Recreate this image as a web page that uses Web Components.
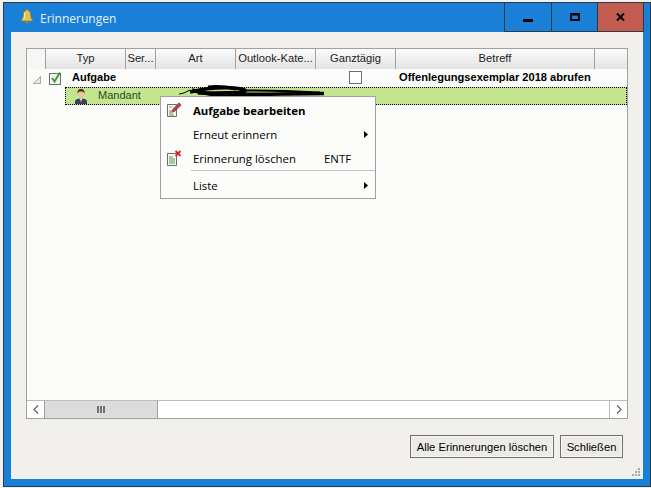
<!DOCTYPE html>
<html lang="de">
<head>
<meta charset="utf-8">
<title>Erinnerungen</title>
<style>
  html, body { margin: 0; height: 100%; overflow: hidden; background: #f0f0f0; }
  body { font: 11px "Liberation Sans", Arial, sans-serif; color: #000; }
</style>
</head>
<body>
<reminder-window caption="Erinnerungen">
  <reminder-grid>
    <grid-row kind="parent">
      <span slot="type">Aufgabe</span>
      <span slot="subject">Offenlegungsexemplar 2018 abrufen</span>
    </grid-row>
    <grid-row kind="child">
      <span slot="type">Mandant</span>
    </grid-row>
  </reminder-grid>
  <dialog-button slot="actions" style="width:144px">Alle Erinnerungen löschen</dialog-button>
  <dialog-button slot="actions" style="width:63px">Schließen</dialog-button>
  <context-menu slot="overlay">
    <menu-entry icon="edit" bold>Aufgabe bearbeiten</menu-entry>
    <menu-entry sub>Erneut erinnern</menu-entry>
    <menu-entry icon="delete" shortcut="ENTF">Erinnerung löschen</menu-entry>
    <menu-sep></menu-sep>
    <menu-entry sub>Liste</menu-entry>
  </context-menu>
</reminder-window>

<script>
// window frame with title bar, caption buttons and client area
class ReminderWindow extends HTMLElement {
  constructor() {
    super();
    const caption = this.getAttribute('caption') || '';
    this.attachShadow({ mode: 'open' }).innerHTML = `
      <style>
        :host {
          display: flex;
          flex-direction: column;
          box-sizing: border-box;
          width: 648px;
          height: 485px;
          margin: 2px 0 0 3px;
          border: 1px solid #2b3a4a;
          background: #1a7fd6;
          position: relative;
        }
        .bar { display: flex; align-items: stretch; height: 29px; flex: none; }
        .bell { margin: 6px 0 0 17px; }
        .title {
          flex: 1;
          padding: 7px 0 0 7px;
          font: 12px "Open Sans", "Noto Sans", sans-serif;
          color: #e6f1fb;
        }
        .cap {
          box-sizing: border-box;
          display: flex;
          align-items: center;
          justify-content: center;
          border-left: 1px solid #2b3a4a;
          border-bottom: 1px solid #2b3a4a;
        }
        .min { width: 47px; }
        .max { width: 46px; }
        .close { width: 47px; background: #c25b50; border-right: 1px solid #2b3a4a; margin-right: 6px; }
        .client {
          flex: 1;
          min-height: 0;
          margin: 0 7px 7px;
          padding: 16px 15px 21px;
          display: flex;
          flex-direction: column;
          background: #f1f0ed;
          position: relative;
        }
        .grid { flex: 1; min-height: 0; display: flex; }
        .actions { display: flex; justify-content: flex-end; gap: 6px; margin: 16px 5px 0 0; }
        .grip { position: absolute; right: 2px; bottom: 2px; }
      </style>
      <div class="bar">
        <svg class="bell" width="12" height="15" viewBox="0 0 12 15">
          <path d="M6 0.5c.8 0 1.2.5 1.2 1.1C9 2.2 9.6 3.8 9.7 6c.1 2.500.8 3.900 1.800 5v1H.5v-1c1-1.100 1.700-2.500 1.800-5 .1-2.200.7-3.800 2.500-4.400C4.800 1 5.200.5 6 .5z" fill="#e3c34f" stroke="#8f7a2c" stroke-width=".7"/>
          <path d="M4.300 12.500h3.400c0 1.200-.8 2-1.700 2s-1.700-.8-1.700-2z" fill="#a88a32"/>
          <path d="M4 3.500C3.500 5 3.600 8 2.800 10.500" stroke="#fff3b8" fill="none"/>
        </svg>
        <div class="title">${caption}</div>
        <div class="cap min">
          <svg width="10" height="10" viewBox="0 0 10 10"><rect y="7" width="10" height="3"/></svg>
        </div>
        <div class="cap max">
          <svg width="10" height="8" viewBox="0 0 10 8"><path fill-rule="evenodd" d="M0 0h10v8H0zM2 2.500v3.500h6V2.500z"/></svg>
        </div>
        <div class="cap close">
          <svg width="9" height="8" viewBox="0 0 9 8"><path d="M1 .5l7 7M8 .5l-7 7" stroke="#000" stroke-width="2" fill="none"/></svg>
        </div>
      </div>
      <div class="client">
        <div class="grid"><slot></slot></div>
        <div class="actions"><slot name="actions"></slot></div>
        <svg class="grip" width="9" height="9" viewBox="0 0 9 9" fill="#a8a8a4">
          <rect x="6" y="0" width="2" height="2"/><rect x="3" y="3" width="2" height="2"/><rect x="6" y="3" width="2" height="2"/>
          <rect x="0" y="6" width="2" height="2"/><rect x="3" y="6" width="2" height="2"/><rect x="6" y="6" width="2" height="2"/>
        </svg>
        <slot name="overlay"></slot>
      </div>
    `;
  }
}
customElements.define('reminder-window', ReminderWindow);

// grid with column header, rows and the horizontal scrollbar
class ReminderGrid extends HTMLElement {
  constructor() {
    super();
    const cols = [['Typ', 80], ['Ser...', 30], ['Art', 80], ['Outlook-Kate...', 80], ['Ganztägig', 80], ['Betreff', 199], ['', 0]];
    const heads = cols.map(([t, w]) =>
      `<div class="head" style="${w ? `width:${w}px` : 'flex:1'}">${t}</div>`).join('');
    this.attachShadow({ mode: 'open' }).innerHTML = `
      <style>
        :host {
          display: flex;
          flex-direction: column;
          flex: 1;
          box-sizing: border-box;
          border: 1px solid #a0a0a0;
          background: #fcfcfa;
        }
        .heads { display: flex; height: 20px; flex: none; }
        .corner { width: 18px; background: #f6f6f4; border-right: 1px solid #a0a0a0; }
        .head {
          box-sizing: border-box;
          padding: 3px 0 0;
          text-align: center;
          white-space: nowrap;
          overflow: hidden;
          font-size: 11.2px;
          color: #222;
          border-right: 1px solid #a0a0a0;
          background: linear-gradient(#fbfbfb, #e4e4e4);
        }
        .head:last-child { border-right: 0; }
        .body { flex: 1; min-height: 0; }
      </style>
      <div class="heads"><div class="corner"></div>${heads}</div>
      <div class="body"><slot></slot></div>
      <h-scrollbar></h-scrollbar>
    `;
  }
}
customElements.define('reminder-grid', ReminderGrid);

// one row of the tree, parent (task) or child (client)
class GridRow extends HTMLElement {
  constructor() {
    super();
    const parent = this.getAttribute('kind') === 'parent';
    const tick = `
      <svg width="14" height="14" viewBox="0 0 14 14">
        <rect x=".5" y="2.500" width="11" height="11" fill="#f4f4f4" stroke="#6e6e6e"/>
        <path d="M3 7l2.500 3.500L11 1.500" fill="none" stroke="#3f9c2a" stroke-width="2"/>
      </svg>`;
    const person = `
      <svg width="14" height="16" viewBox="0 0 14 16" style="margin-bottom:1px">
        <path d="M1 16v-2.500C1 11.500 3 10.500 7 10.500s6 1 6 3V16z" fill="#33415f"/>
        <path d="M5.500 10.500L7 14l1.500-3.500z" fill="#fff"/>
        <path d="M6.600 11.500h.8l.3 3h-1.400z" fill="#b03a2e"/>
        <ellipse cx="7" cy="6" rx="3.300" ry="4" fill="#eec39a"/>
        <path d="M3.500 6C3 2 5 1 7 1s4 1 3.500 5C10 4 9 3.500 7 3.500S4 4 3.500 6z" fill="#4a2f1b"/>
      </svg>`;
    this.attachShadow({ mode: 'open' }).innerHTML = parent ? `
      <style>
        :host { display: flex; align-items: center; height: 18px; font-weight: bold; }
        .tree { margin: 3px 8px 0 6px; }
        .type { box-sizing: border-box; width: 286px; padding: 0 0 2px 9px; }
        .box { box-sizing: border-box; width: 13px; height: 13px; margin-bottom: 2px; background: #fff; border: 1px solid #707070; }
        .sub { padding: 0 0 2px 37px; white-space: nowrap; font-size: 11.1px; }
      </style>
      <svg class="tree" width="8" height="8" viewBox="0 0 8 8"><path d="M7.500.5v7h-7z" fill="#e8e8e8" stroke="#a8a8a8"/></svg>
      ${tick}
      <div class="type"><slot name="type"></slot></div>
      <div class="box"></div>
      <div class="sub"><slot name="subject"></slot></div>
    ` : `
      <style>
        :host {
          display: flex;
          align-items: center;
          box-sizing: border-box;
          height: 18px;
          margin-left: 38px;
          padding-left: 9px;
          background: #c4e58f;
          outline: 1px dotted #000;
          outline-offset: -1px;
          color: #1f4d1f;
        }
        .type { padding: 0 0 2px 10px; }
      </style>
      ${person}
      <div class="type"><slot name="type"></slot></div>
    `;
  }
}
customElements.define('grid-row', GridRow);

class HScrollbar extends HTMLElement {
  constructor() {
    super();
    this.attachShadow({ mode: 'open' }).innerHTML = `
      <style>
        :host {
          display: flex;
          flex: none;
          height: 17px;
          background: #fff;
          border-top: 1px solid #bcbcbc;
        }
        .btn { width: 17px; display: flex; align-items: center; justify-content: center; }
        .thumb {
          box-sizing: border-box;
          width: 114px;
          background: #dcdcdc;
          border: 1px solid #a0a0a0;
          border-width: 0 1px;
          display: flex;
          align-items: center;
          justify-content: center;
        }
        .track { flex: 1; }
      </style>
      <div class="btn"><svg width="6" height="9" viewBox="0 0 6 9"><path d="M5 .5l-4 4 4 4" fill="none" stroke="#606060" stroke-width="1.200"/></svg></div>
      <div class="thumb"><svg width="8" height="7" viewBox="0 0 8 7" fill="#707070"><rect width="2" height="7"/><rect x="3" width="2" height="7"/><rect x="6" width="2" height="7"/></svg></div>
      <div class="track"></div>
      <div class="btn" style="border-left:1px solid #bcbcbc"><svg width="6" height="9" viewBox="0 0 6 9"><path d="M1 .5l4 4-4 4" fill="none" stroke="#606060" stroke-width="1.200"/></svg></div>
    `;
  }
}
customElements.define('h-scrollbar', HScrollbar);

class DialogButton extends HTMLElement {
  constructor() {
    super();
    this.attachShadow({ mode: 'open' }).innerHTML = `
      <style>
        :host {
          display: flex;
          align-items: center;
          justify-content: center;
          box-sizing: border-box;
          height: 23px;
          border: 1px solid #707070;
          box-shadow: inset 0 0 0 1px #f6f6f4;
          background: #ecebe8;
          font-size: 11.2px;
          white-space: nowrap;
        }
      </style>
      <slot></slot>
    `;
  }
}
customElements.define('dialog-button', DialogButton);

// popup over the grid, plus the scribble that blacks out the hidden text
class ContextMenu extends HTMLElement {
  constructor() {
    super();
    this.attachShadow({ mode: 'open' }).innerHTML = `
      <style>
        :host { position: absolute; left: 0; top: 0; width: 0; height: 0; display: block; font: 11.4px "Open Sans", "Noto Sans", sans-serif; }
        .scribble { position: absolute; left: 167px; top: 53px; }
        .menu {
          position: absolute;
          left: 149px;
          top: 64px;
          box-sizing: border-box;
          width: 216px;
          height: 103px;
          padding: 1px 0;
          border: 1px solid #a0a0a0;
          background: #fcfcfa;
        }
      </style>
      <svg class="scribble" width="150" height="14" viewBox="0 0 150 14" fill="none" stroke="#000">
        <path stroke-width="3.500" d="M12 7C24 4 40 2 56 3c12 1 14 3 8 4S30 8 20 8"/>
        <path stroke-width="3.500" d="M14 5c16 5 40 7 60 7"/>
        <path stroke-width="3" d="M30 2c10-1 20 0 28 2"/>
        <path stroke-width="3.500" d="M50 8.500c30 2 50 0 96 0"/>
        <path stroke-width="2" d="M66 5.500c30 0 55 1 76 2"/>
        <path stroke-width="1" d="M1 9l5-1 6-3"/>
      </svg>
      <div class="menu"><slot></slot></div>
    `;
  }
}
customElements.define('context-menu', ContextMenu);

const MENU_ICONS = {
  edit: `<svg width="16" height="16" viewBox="0 0 16 16">
      <path d="M1.500 2.500h9v12h-9z" fill="#f6f6f2" stroke="#6e6e6e"/>
      <path d="M3 9h3M3 11h4M3 13h5" stroke="#5f9a45"/>
      <path d="M3 5h3" stroke="#9a9a9a"/>
      <path d="M6 10l1-3L13 .8l2.200 2.200L9 9.200z" fill="#b8434e" stroke="#7b2731" stroke-width=".6"/>
    </svg>`,
  delete: `<svg width="16" height="16" viewBox="0 0 16 16">
      <path d="M1.500 3.500h9v12h-9z" fill="#f6f6f2" stroke="#6e6e6e"/>
      <path d="M3 7h4M3 9h6M3 11h6M3 13h6" stroke="#5f9a45"/>
      <path d="M9.500 1l5 5M14.500 1l-5 5" stroke="#d8232a" stroke-width="1.800"/>
    </svg>`
};

class MenuEntry extends HTMLElement {
  constructor() {
    super();
    const icon = MENU_ICONS[this.getAttribute('icon')] || '';
    const shortcut = this.getAttribute('shortcut') || '';
    const arrow = this.hasAttribute('sub')
      ? '<svg class="arrow" width="4" height="7" viewBox="0 0 4 7"><path d="M0 0l4 3.500L0 7z"/></svg>' : '';
    this.attachShadow({ mode: 'open' }).innerHTML = `
      <style>
        :host { display: flex; align-items: center; height: 24px; position: relative; }
        :host([bold]) { font-weight: bold; }
        .icon { box-sizing: border-box; width: 32px; padding-left: 5px; display: flex; }
        .label { width: 131px; white-space: nowrap; }
        .arrow { position: absolute; right: 7px; top: 9px; }
      </style>
      <div class="icon">${icon}</div>
      <div class="label"><slot></slot></div>
      <div>${shortcut}</div>
      ${arrow}
    `;
  }
}
customElements.define('menu-entry', MenuEntry);

class MenuSep extends HTMLElement {
  constructor() {
    super();
    this.attachShadow({ mode: 'open' }).innerHTML = `
      <style>:host { display: block; height: 1px; margin: 0 0 2px 30px; background: #c4c4c4; }</style>
    `;
  }
}
customElements.define('menu-sep', MenuSep);
</script>
</body>
</html>
